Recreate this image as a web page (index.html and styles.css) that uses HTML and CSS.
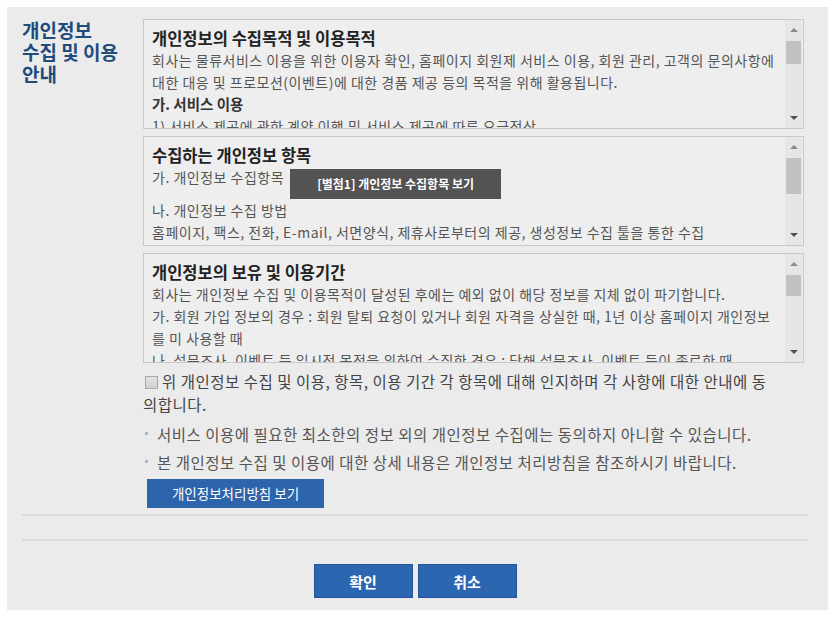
FILE: index.html
```html
<!DOCTYPE html>
<html>

<head>
    <title>개인정보 수집 및 이용 안내</title>
    <link rel="stylesheet" href="styles.css">
</head>

<body>
    <div class="panel">
        <!-- 개인정보 수집 및 이용 안내 -->
        <div class="agree-row">
            <h2 class="section-title">개인정보<br>수집 및 이용<br>안내</h2>

            <div class="section-body">
                <div class="terms-box">
                    <div class="terms-text">
                        <h3>개인정보의 수집목적 및 이용목적</h3>
                        <p>회사는 물류서비스 이용을 위한 이용자 확인, 홈페이지 회원제 서비스 이용, 회원 관리, 고객의 문의사항에 대한 대응 및 프로모션(이벤트)에 대한 경품 제공 등의 목적을 위해 활용됩니다.</p>
                        <h4>가. 서비스 이용</h4>
                        <p>1) 서비스 제공에 관한 계약 이행 및 서비스 제공에 따른 요금정산</p>
                    </div>
                    <div class="scrollbar">
                        <span class="arrow-up"></span>
                        <div class="track"><div class="thumb" style="height: 23px"></div></div>
                        <span class="arrow-down"></span>
                    </div>
                </div>

                <div class="terms-box">
                    <div class="terms-text">
                        <h3>수집하는 개인정보 항목</h3>
                        <p>가. 개인정보 수집항목<a class="attach-btn" href="#">[별첨1] 개인정보 수집항목 보기</a></p>
                        <p>나. 개인정보 수집 방법</p>
                        <p>홈페이지, 팩스, 전화, E-mail, 서면양식, 제휴사로부터의 제공, 생성정보 수집 툴을 통한 수집</p>
                    </div>
                    <div class="scrollbar">
                        <span class="arrow-up"></span>
                        <div class="track"><div class="thumb" style="height: 36px"></div></div>
                        <span class="arrow-down"></span>
                    </div>
                </div>

                <div class="terms-box">
                    <div class="terms-text">
                        <h3>개인정보의 보유 및 이용기간</h3>
                        <p>회사는 개인정보 수집 및 이용목적이 달성된 후에는 예외 없이 해당 정보를 지체 없이 파기합니다.</p>
                        <p>가. 회원 가입 정보의 경우 : 회원 탈퇴 요청이 있거나 회원 자격을 상실한 때, 1년 이상 홈페이지 개인정보를 미 사용할 때</p>
                        <p>나. 설문조사, 이벤트 등 일시적 목적을 위하여 수집한 경우 : 당해 설문조사, 이벤트 등이 종료한 때</p>
                    </div>
                    <div class="scrollbar">
                        <span class="arrow-up"></span>
                        <div class="track"><div class="thumb" style="height: 21px"></div></div>
                        <span class="arrow-down"></span>
                    </div>
                </div>

                <label class="agree-check">
                    <input type="checkbox" id="agree">
                    <span class="fake-check"></span> 위 개인정보 수집 및 이용, 항목, 이용 기간 각 항목에 대해 인지하며 각 사항에 대한 안내에 동의합니다.
                </label>

                <ul class="notes">
                    <li>서비스 이용에 필요한 최소한의 정보 외의 개인정보 수집에는 동의하지 아니할 수 있습니다.</li>
                    <li>본 개인정보 수집 및 이용에 대한 상세 내용은 개인정보 처리방침을 참조하시기 바랍니다.</li>
                </ul>

                <a class="policy-btn" href="#">개인정보처리방침 보기</a>
            </div>
        </div>

        <!-- 확인 / 취소 -->
        <div class="actions">
            <button type="button" class="action-btn">확인</button>
            <button type="button" class="action-btn">취소</button>
        </div>
    </div>
</body>

</html>
```

FILE: styles.css
```css
body {
    font-family: "Noto Sans CJK KR", "Noto Sans", sans-serif;
    background-color: #fff;
    margin: 0;
    padding: 7px;
}

.panel {
    width: 786px;
    background-color: #ebebeb;
    padding: 12px 20px 12px 15px;
}

.agree-row {
    display: grid;
    grid-template-columns: 121px 661px;
    padding-bottom: 6px;
    border-bottom: 2px solid #dcdcdc;
}

.section-title {
    margin: 0;
    font-size: 19px;
    line-height: 22px;
    font-weight: bold;
    color: #1f4b7d;
}

/* scroll boxes */
.terms-box {
    display: flex;
    height: 108px;
    margin-bottom: 7px;
    background-color: #eeeeee;
    border: 1px solid #c8c8c8;
}

.terms-text {
    flex: 1;
    overflow: hidden;
    padding: 7px 7px 0 8px;
    color: #555;
    font-size: 14px;
    letter-spacing: 0.5px;
    line-height: 22px;
}

.terms-text h3 {
    margin: 0;
    font-size: 16.5px;
    font-weight: bold;
    color: #222;
    letter-spacing: 0;
}

.terms-text h4 {
    margin: 0;
    font-size: 14.5px;
    font-weight: bold;
    color: #333;
    letter-spacing: 0;
}

.terms-text p {
    margin: 0;
}

.attach-btn {
    display: inline-block;
    vertical-align: top;
    width: 211px;
    height: 30px;
    margin: 3px 0 0 6px;
    background-color: #535353;
    color: #fff;
    font-size: 12px;
    font-weight: bold;
    letter-spacing: 0;
    line-height: 30px;
    text-align: center;
    text-decoration: none;
}

.scrollbar {
    display: flex;
    flex-direction: column;
    width: 17px;
    margin-right: 1px;
    background-color: #e6e6e6;
}

.arrow-up,
.arrow-down {
    height: 20px;
    display: flex;
    align-items: center;
    justify-content: center;
}

.arrow-up::before {
    content: "";
    border-left: 4px solid transparent;
    border-right: 4px solid transparent;
    border-bottom: 4px solid #8a8a8a;
}

.arrow-down::before {
    content: "";
    border-left: 4px solid transparent;
    border-right: 4px solid transparent;
    border-top: 4px solid #505050;
}

.track {
    flex: 1;
}

.thumb {
    background-color: #c2c2c2;
    margin: 1px 1px 0;
}

/* agreement */
.agree-check {
    display: block;
    padding-right: 29px;
    color: #444;
    font-size: 15.5px;
    letter-spacing: 0.5px;
    line-height: 23px;
}

.agree-check input {
    display: none;
}

.fake-check {
    display: inline-block;
    width: 11px;
    height: 11px;
    margin-left: 2px;
    vertical-align: -1px;
    border: 1px solid #a9a9a9;
    background: linear-gradient(#e4e4e4, #cfcfcf);
}

.notes {
    list-style: none;
    margin: 4px 0 0;
    padding: 0;
    color: #555;
    font-size: 15.5px;
    letter-spacing: 0.5px;
    line-height: 28px;
}

.notes li {
    position: relative;
    padding-left: 14px;
}

.notes li::before {
    content: "";
    position: absolute;
    left: 2px;
    top: 12px;
    width: 3px;
    height: 3px;
    background-color: #a9bccd;
}

.policy-btn {
    display: block;
    width: 177px;
    height: 29px;
    margin: 3px 0 0 4px;
    background-color: #2d65ad;
    color: #fff;
    font-size: 13.5px;
    line-height: 29px;
    text-align: center;
    text-decoration: none;
}

/* buttons */
.actions {
    display: flex;
    justify-content: center;
    gap: 5px;
    margin-top: 23px;
    padding-top: 23px;
    border-top: 2px solid #dcdcdc;
}

.action-btn {
    width: 99px;
    height: 34px;
    padding: 0;
    background-color: #2d66b0;
    border: 1px solid #24569a;
    color: #fff;
    font-family: inherit;
    font-size: 15px;
    font-weight: bold;
    cursor: pointer;
}
```
